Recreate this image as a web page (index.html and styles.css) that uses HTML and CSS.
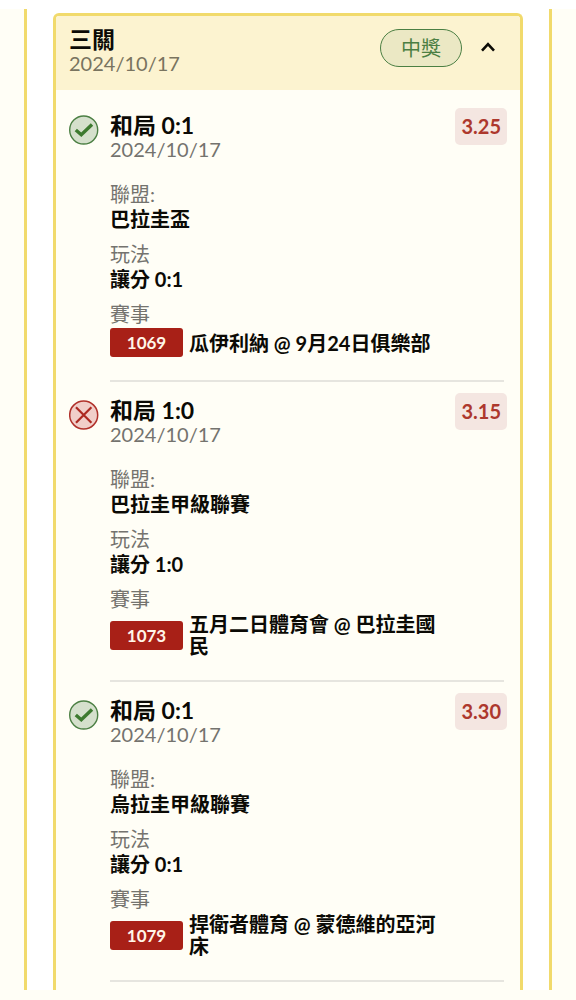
FILE: index.html
```html
<!DOCTYPE html>
<html lang="zh-Hant">
<head>
    <meta charset="UTF-8">
    <meta name="viewport" content="width=device-width, initial-scale=1.0">
    <title>三關</title>
    <link rel="stylesheet" href="styles.css">
</head>
<body>
    <main class="page">
        <div class="panel">
            <section class="card">
                <header class="card-header">
                    <div class="card-heading">
                        <h1 class="title">三關</h1>
                        <div class="date">2024/10/17</div>
                    </div>
                    <span class="status">中獎</span>
                    <button class="toggle" type="button" aria-label="收合" aria-expanded="true">
                        <svg width="16" height="12" viewBox="0 0 16 12" fill="none" stroke="#0b0a05" stroke-width="2.6">
                            <path d="M2 9.7 8 3.2 14 9.7"/>
                        </svg>
                    </button>
                </header>

                <div class="legs">
                    <article class="leg">
                        <svg class="leg-icon" viewBox="0 0 30 30" fill="none">
                            <circle cx="14.7" cy="15" r="14" fill="#d5e0cc" stroke="#4b7f43" stroke-width="1.4"/>
                            <path d="M6.8 15 12.3 19.8 23 9.6" stroke="#3d7a2f" stroke-width="3.4"/>
                        </svg>
                        <div class="leg-body">
                            <h2 class="title">和局 0:1</h2>
                            <div class="date">2024/10/17</div>
                            <dl class="fields">
                                <div>
                                    <dt>聯盟:</dt>
                                    <dd>巴拉圭盃</dd>
                                </div>
                                <div>
                                    <dt>玩法</dt>
                                    <dd>讓分 0:1</dd>
                                </div>
                                <div>
                                    <dt>賽事</dt>
                                    <dd class="match"><span class="match-id">1069</span><span class="match-name">瓜伊利納 @ 9月24日俱樂部</span></dd>
                                </div>
                            </dl>
                        </div>
                        <span class="odds">3.25</span>
                        <hr class="divider">
                    </article>

                    <article class="leg">
                        <svg class="leg-icon" viewBox="0 0 30 30" fill="none">
                            <circle cx="14.7" cy="15" r="14" fill="#f1cfca" stroke="#b0302a" stroke-width="1.5"/>
                            <path d="M7 7.3 22.4 22.7M22.4 7.3 7 22.7" stroke="#ad2a22" stroke-width="2.2"/>
                        </svg>
                        <div class="leg-body">
                            <h2 class="title">和局 1:0</h2>
                            <div class="date">2024/10/17</div>
                            <dl class="fields">
                                <div>
                                    <dt>聯盟:</dt>
                                    <dd>巴拉圭甲級聯賽</dd>
                                </div>
                                <div>
                                    <dt>玩法</dt>
                                    <dd>讓分 1:0</dd>
                                </div>
                                <div>
                                    <dt>賽事</dt>
                                    <dd class="match"><span class="match-id">1073</span><span class="match-name">五月二日體育會 @ 巴拉圭國民</span></dd>
                                </div>
                            </dl>
                        </div>
                        <span class="odds">3.15</span>
                        <hr class="divider">
                    </article>

                    <article class="leg">
                        <svg class="leg-icon" viewBox="0 0 30 30" fill="none">
                            <circle cx="14.7" cy="15" r="14" fill="#d5e0cc" stroke="#4b7f43" stroke-width="1.4"/>
                            <path d="M6.8 15 12.3 19.8 23 9.6" stroke="#3d7a2f" stroke-width="3.4"/>
                        </svg>
                        <div class="leg-body">
                            <h2 class="title">和局 0:1</h2>
                            <div class="date">2024/10/17</div>
                            <dl class="fields">
                                <div>
                                    <dt>聯盟:</dt>
                                    <dd>烏拉圭甲級聯賽</dd>
                                </div>
                                <div>
                                    <dt>玩法</dt>
                                    <dd>讓分 0:1</dd>
                                </div>
                                <div>
                                    <dt>賽事</dt>
                                    <dd class="match"><span class="match-id">1079</span><span class="match-name">捍衛者體育 @ 蒙德維的亞河床</span></dd>
                                </div>
                            </dl>
                        </div>
                        <span class="odds">3.30</span>
                        <hr class="divider">
                    </article>
                </div>
            </section>
        </div>
    </main>
</body>
</html>
```

FILE: styles.css
```css
* {
    box-sizing: border-box;
}

body {
    margin: 0;
    background: #fffef6;
    color: #0b0a05;
    font-family: Lato, "Noto Sans CJK TC", sans-serif;
    font-size: 20px;
    line-height: 25px;
}

h1, h2, dl, dd {
    margin: 0;
}

.page {
    border-top: 9px solid #fff;
    padding: 0 24px;
}

.panel {
    background: #fff;
    border: solid #f1da6c;
    border-width: 0 3px;
    padding: 4px 26px 0;
}

.card {
    background: #fffef6;
    border: 3px solid #f1da6c;
    border-bottom: none;
    border-radius: 6px 6px 0 0;
    overflow: hidden;
}

.card-header {
    display: flex;
    align-items: flex-start;
    background: #fcf3d0;
    padding: 11px 18px 15px 13px;
}

.card-heading {
    flex: 1;
}

.title {
    font-size: 23px;
    font-weight: 700;
    line-height: 24px;
}

.date {
    font-size: 20px;
    line-height: 24px;
    color: #74736e;
}

.card-header .date {
    color: #79745f;
}

.status {
    margin-top: 2px;
    border: 1px solid #4b7f43;
    border-radius: 19px;
    background: #ebe8c4;
    color: #4b7f43;
    padding: 6px 20px;
    line-height: 24px;
}

.toggle {
    display: flex;
    border: none;
    background: none;
    padding: 14px 6px 10px;
    margin-left: 12px;
    cursor: pointer;
}

.legs {
    padding: 7px 13px 8px;
}

.leg {
    display: grid;
    grid-template-columns: 30px 1fr auto;
    column-gap: 11px;
    align-items: start;
}

.leg-icon {
    width: 30px;
    height: 30px;
    margin-top: 18px;
}

.leg-body {
    padding: 16px 0 23px;
    margin-right: -11px;
}

.fields {
    display: flex;
    flex-direction: column;
    gap: 10px;
    margin-top: 21px;
}

.fields dt {
    color: #74736e;
}

.fields dd {
    font-weight: 700;
}

.fields .match {
    display: flex;
    align-items: center;
    gap: 6px;
    margin-top: 1px;
    line-height: 22px;
}

.match-id {
    flex: none;
    width: 73px;
    border-radius: 3px;
    background: #a82017;
    color: #fff5e8;
    font-size: 17px;
    line-height: 29px;
    text-align: center;
}

.odds {
    margin-top: 11px;
    border-radius: 5px;
    background: #f4e6e1;
    color: #ad382d;
    padding: 6px;
    font-weight: 700;
}

.divider {
    grid-column: 2 / 4;
    width: auto;
    height: 2px;
    margin: 0 3px 0 0;
    border: none;
    background: #e6e5df;
    justify-self: stretch;
}
```
